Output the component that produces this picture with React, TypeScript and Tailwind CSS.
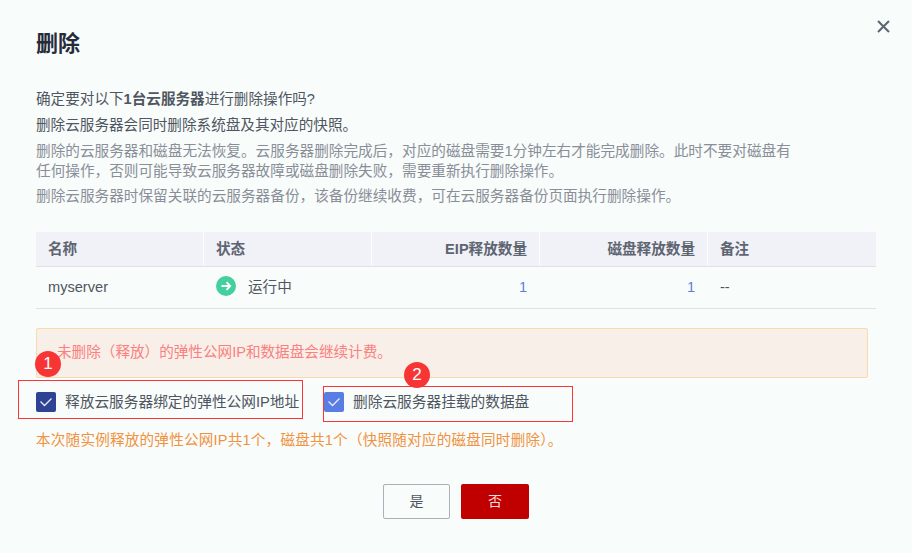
const FONT = '"Liberation Sans", "Noto Sans CJK SC", sans-serif';

const columns = [
  { label: '名称', align: 'text-left' },
  { label: '状态', align: 'text-left' },
  { label: 'EIP释放数量', align: 'text-right' },
  { label: '磁盘释放数量', align: 'text-right' },
  { label: '备注', align: 'text-left' },
];

function Check({ bg, label, width }: { bg: string; label: string; width: string }) {
  return (
    <label className={`flex items-center gap-[9px] h-5 ${width}`}>
      <span className={`w-5 h-5 rounded-[2px] flex items-center justify-center ${bg}`}>
        <svg width="14" height="10" viewBox="0 0 14 10" fill="none" stroke="#e8edf8" strokeWidth="1.3">
          <path d="M1.5 4.5 L5.5 8.5 L12.5 1.5" />
        </svg>
      </span>
      <span className="text-[14.7px] text-[#4f5662] whitespace-nowrap">{label}</span>
    </label>
  );
}

function Badge({ n, className }: { n: number; className: string }) {
  return (
    <span className={`absolute w-[26px] h-[26px] rounded-full bg-[#f83535] text-white text-[17px] flex items-center justify-center ${className}`}>
      {n}
    </span>
  );
}

export default function App() {
  return (
    <div className="relative w-[912px] h-[553px] overflow-hidden bg-[#f8fcfa] px-9 pt-[30px]" style={{ fontFamily: FONT }}>
      <button className="absolute top-[20px] right-[22px] text-[#5c6672]">
        <svg width="13" height="13" viewBox="0 0 13 13" fill="none" stroke="currentColor" strokeWidth="2">
          <path d="M1 1 L12 12 M12 1 L1 12" />
        </svg>
      </button>

      <h1 className="text-[22px] leading-7 font-bold text-[#252b3a]">删除</h1>

      <div className="mt-[31px] w-[762px] text-[14.6px] text-[#4f5662]">
        <p className="leading-5">
          确定要对以下<b className="font-bold">1台云服务器</b>进行删除操作吗?
        </p>
        <p className="leading-5 mt-[6px]">删除云服务器会同时删除系统盘及其对应的快照。</p>
        <div className="text-[#8a8e99] text-[14.65px]">
          <p className="leading-5 mt-[6px]">
            删除的云服务器和磁盘无法恢复。云服务器删除完成后，对应的磁盘需要1分钟左右才能完成删除。此时不要对磁盘有任何操作，否则可能导致云服务器故障或磁盘删除失败，需要重新执行删除操作。
          </p>
          <p className="leading-5 mt-[5px]">删除云服务器时保留关联的云服务器备份，该备份继续收费，可在云服务器备份页面执行删除操作。</p>
        </div>
      </div>

      <div className="mt-[26px] w-[840px] text-[14.6px]">
        <div className="grid grid-cols-[167px_167px_167px_167px_1fr] gap-x-px h-[35px] border-b border-[#dfe1e6]">
          {columns.map((c) => (
            <div key={c.label} className={`bg-[#f0f2f8] px-3 leading-[34px] font-bold text-[#5e6570] ${c.align}`}>
              {c.label}
            </div>
          ))}
        </div>
        <div className="grid grid-cols-[167px_167px_167px_167px_1fr] gap-x-px h-[42px] items-center border-b border-[#dfe1e6] text-[#4f5662]">
          <div className="px-3">myserver</div>
          <div className="px-3 flex items-center gap-3">
            <span className="w-5 h-5 -mt-[3px] rounded-full bg-[#44cf9e] flex items-center justify-center">
              <svg width="12" height="12" viewBox="0 0 12 12" fill="none" stroke="white" strokeWidth="1.8">
                <path d="M1.5 6 H10 M6.5 2.2 L10.2 6 L6.5 9.8" />
              </svg>
            </span>
            运行中
          </div>
          <div className="px-3 text-right text-[#5e7ce0]">1</div>
          <div className="px-3 text-right text-[#5e7ce0]">1</div>
          <div className="px-3">--</div>
        </div>
      </div>

      <div className="mt-[19px] w-[832px] h-[50px] rounded-[2px] border border-[#fbd9ac] bg-[#f8efe9] pl-[20px] leading-[47px] text-[14.6px] text-[#fb7f7f]">
        未删除（释放）的弹性公网IP和数据盘会继续计费。
      </div>

      <div className="mt-[14px] flex">
        <Check bg="bg-[#2e4393]" label="释放云服务器绑定的弹性公网IP地址" width="w-[288px]" />
        <Check bg="bg-[#5a7de3]" label="删除云服务器挂载的数据盘" width="w-[250px]" />
      </div>

      <p className="mt-[18px] leading-5 text-[14.6px] tracking-[0.2px] text-[#f0923f]">
        本次随实例释放的弹性公网IP共1个，磁盘共1个（快照随对应的磁盘同时删除）。
      </p>

      <div className="mt-[34px] flex justify-center gap-[11px] text-[14px]">
        <button className="w-[67px] h-[35px] rounded-[2px] border border-[#adb0b8] text-[#4f5662]">是</button>
        <button className="w-[68px] h-[35px] rounded-[2px] bg-[#c00000] text-[#f6dcdc]">否</button>
      </div>

      {/* red annotation boxes from the doc */}
      <div className="absolute left-[18px] top-[380px] w-[285px] h-[39px] border border-[#f33]" />
      <div className="absolute left-[323px] top-[386px] w-[250px] h-[36px] border border-[#f33]" />
      <Badge n={1} className="left-[35px] top-[351px]" />
      <Badge n={2} className="left-[404px] top-[362px]" />
    </div>
  );
}
